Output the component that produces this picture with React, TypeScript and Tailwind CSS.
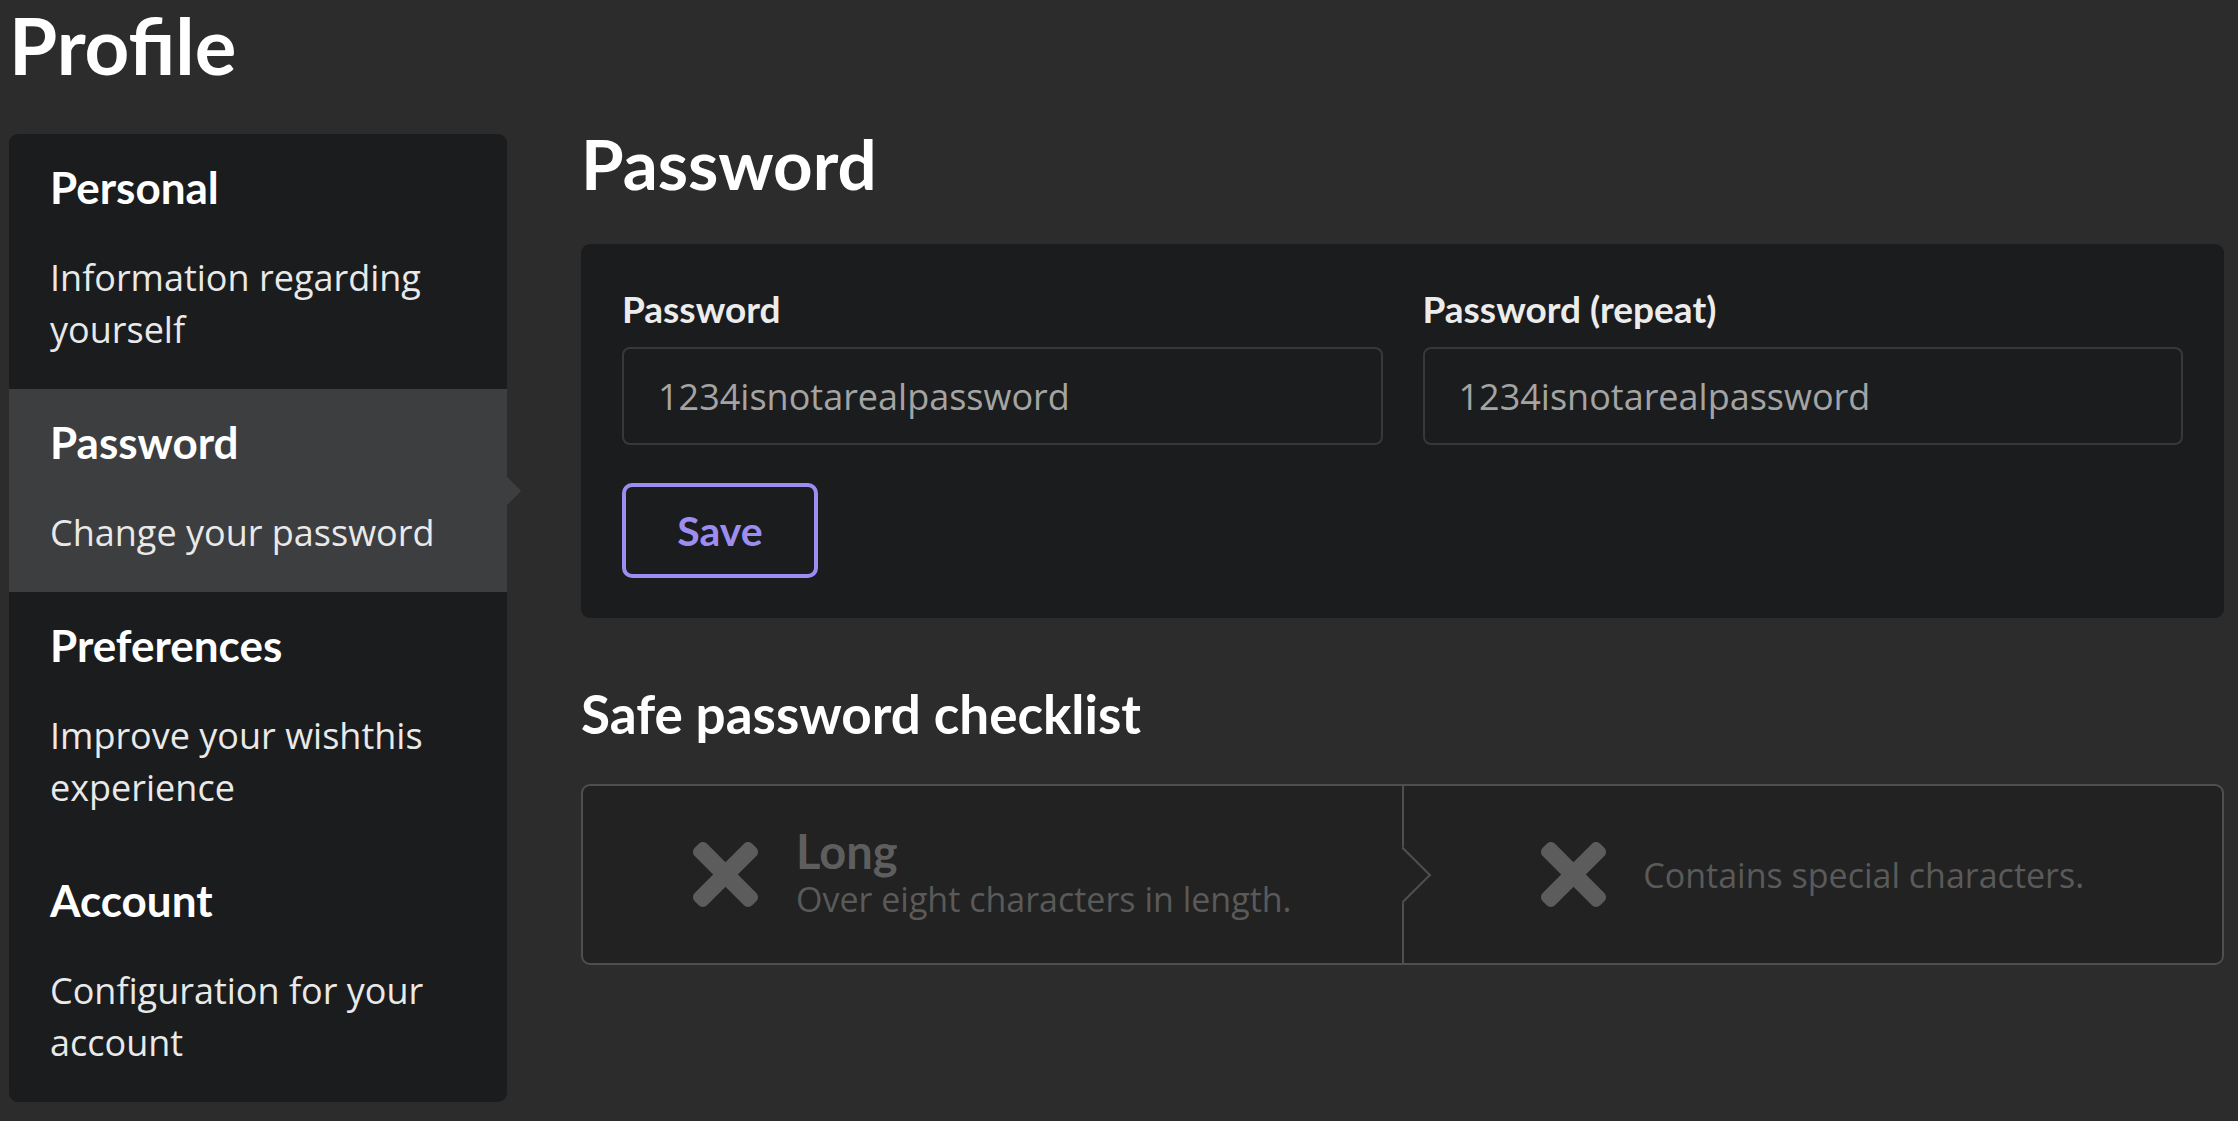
import React from "react";

const lato = "font-[family-name:Lato,'Liberation_Sans',sans-serif]";
const open = "font-[family-name:'Open_Sans','Liberation_Sans',sans-serif]";

function MenuItem({ title, desc, active }: { title: string; desc: string; active?: boolean }) {
  return (
    <div
      className={
        active
          ? "relative bg-[#3d3e40] pl-[41px] pr-[38px] pt-[29px] pb-[33px]"
          : "relative pl-[41px] pr-[38px] pt-[29px] pb-[33px]"
      }
    >
      <div className={`${lato} text-[44px] font-bold leading-[48px] text-white`}>{title}</div>
      <div className={`${open} mt-[41px] text-[36px] leading-[52px] text-[#e9e9e9]`}>{desc}</div>
      {active && (
        <div className="absolute right-[-10px] top-1/2 h-[20px] w-[20px] -translate-y-1/2 rotate-45 bg-[#3d3e40]" />
      )}
    </div>
  );
}

function Field({ label }: { label: string }) {
  return (
    <div>
      <label className={`${lato} block text-[37px] font-bold leading-[42px] text-[#ececec]`}>{label}</label>
      <input
        readOnly
        defaultValue="1234isnotarealpassword"
        className={`${open} mt-[17px] block h-[98px] w-full rounded-[8px] border-2 border-[#37383a] bg-transparent pl-[34px] text-[36px] text-[#a4a4a4] outline-none`}
      />
    </div>
  );
}

function XIcon() {
  return (
    <svg width="65" height="65" viewBox="0 80 352 352" className="shrink-0" aria-hidden="true">
      <path
        fill="#5c5c5c"
        d="M242.72 256l100.07-100.07c12.28-12.28 12.28-32.19 0-44.480l-22.24-22.24c-12.28-12.28-32.19-12.28-44.48 0L176 189.28 75.93 89.21c-12.28-12.28-32.19-12.28-44.48 0L9.21 111.45c-12.28 12.28-12.28 32.19 0 44.48L109.28 256 9.21 356.07c-12.28 12.28-12.28 32.19 0 44.48l22.24 22.24c12.28 12.28 32.2 12.28 44.48 0L176 322.72l100.07 100.07c12.28 12.28 32.2 12.28 44.48 0l22.24-22.24c12.28-12.28 12.28-32.19 0-44.48L242.72 256z"
      />
    </svg>
  );
}

export default function App() {
  return (
    <div className="min-h-screen bg-[#2c2c2c] pl-[9px] pr-[14px]">
      <h1 className={`${lato} mt-0 pt-[8px] text-[78px] font-bold leading-[75px] text-white`}>Profile</h1>
      <div className="mt-[51px] flex items-start gap-[74px]">
        <nav className="w-[498px] shrink-0 rounded-[9px] bg-[#1b1c1d]">
          <MenuItem title="Personal" desc="Information regarding yourself" />
          <MenuItem title="Password" desc="Change your password" active />
          <MenuItem title="Preferences" desc="Improve your wishthis experience" />
          <MenuItem title="Account" desc="Configuration for your account" />
        </nav>
        <main className="min-w-0 flex-1">
          <h2 className={`${lato} text-[69px] font-bold leading-[60px] text-white`}>Password</h2>
          <div className="mt-[50px] rounded-[9px] bg-[#1b1c1d] px-[41px] pt-[44px] pb-[40px]">
            <div className="grid grid-cols-2 gap-x-[40px]">
              <Field label="Password" />
              <Field label="Password (repeat)" />
            </div>
            <button
              className={`${lato} mt-[38px] flex h-[95px] w-[196px] items-center justify-center rounded-[10px] border-[4px] border-[#9d8df1] text-[41px] font-bold text-[#9d8df1]`}
            >
              Save
            </button>
          </div>
          <h3 className={`${lato} mt-[66px] text-[53px] font-bold leading-[60px] text-white`}>
            Safe password checklist
          </h3>
          <div className="mt-[40px] flex h-[181px] rounded-[9px] border-2 border-[#4f4f4f] bg-[#222222]">
            <div className="relative flex flex-1 items-center justify-center gap-[38px] border-r-2 border-[#4f4f4f]">
              <XIcon />
              <div>
                <div className={`${lato} text-[47px] font-bold leading-[42px] text-[#5e5e5e]`}>Long</div>
                <div className={`${open} mt-[6px] text-[34px] leading-[42px] text-[#5a5a5a]`}>
                  Over eight characters in length.
                </div>
              </div>
              <div className="absolute right-[-21px] top-1/2 z-10 h-[40px] w-[40px] -translate-y-1/2 rotate-45 border-t-2 border-r-2 border-[#4f4f4f] bg-[#222222]" />
            </div>
            <div className="flex flex-1 items-center justify-center gap-[37px]">
              <XIcon />
              <div className={`${open} text-[34px] leading-[42px] text-[#5a5a5a]`}>Contains special characters.</div>
            </div>
          </div>
        </main>
      </div>
    </div>
  );
}
